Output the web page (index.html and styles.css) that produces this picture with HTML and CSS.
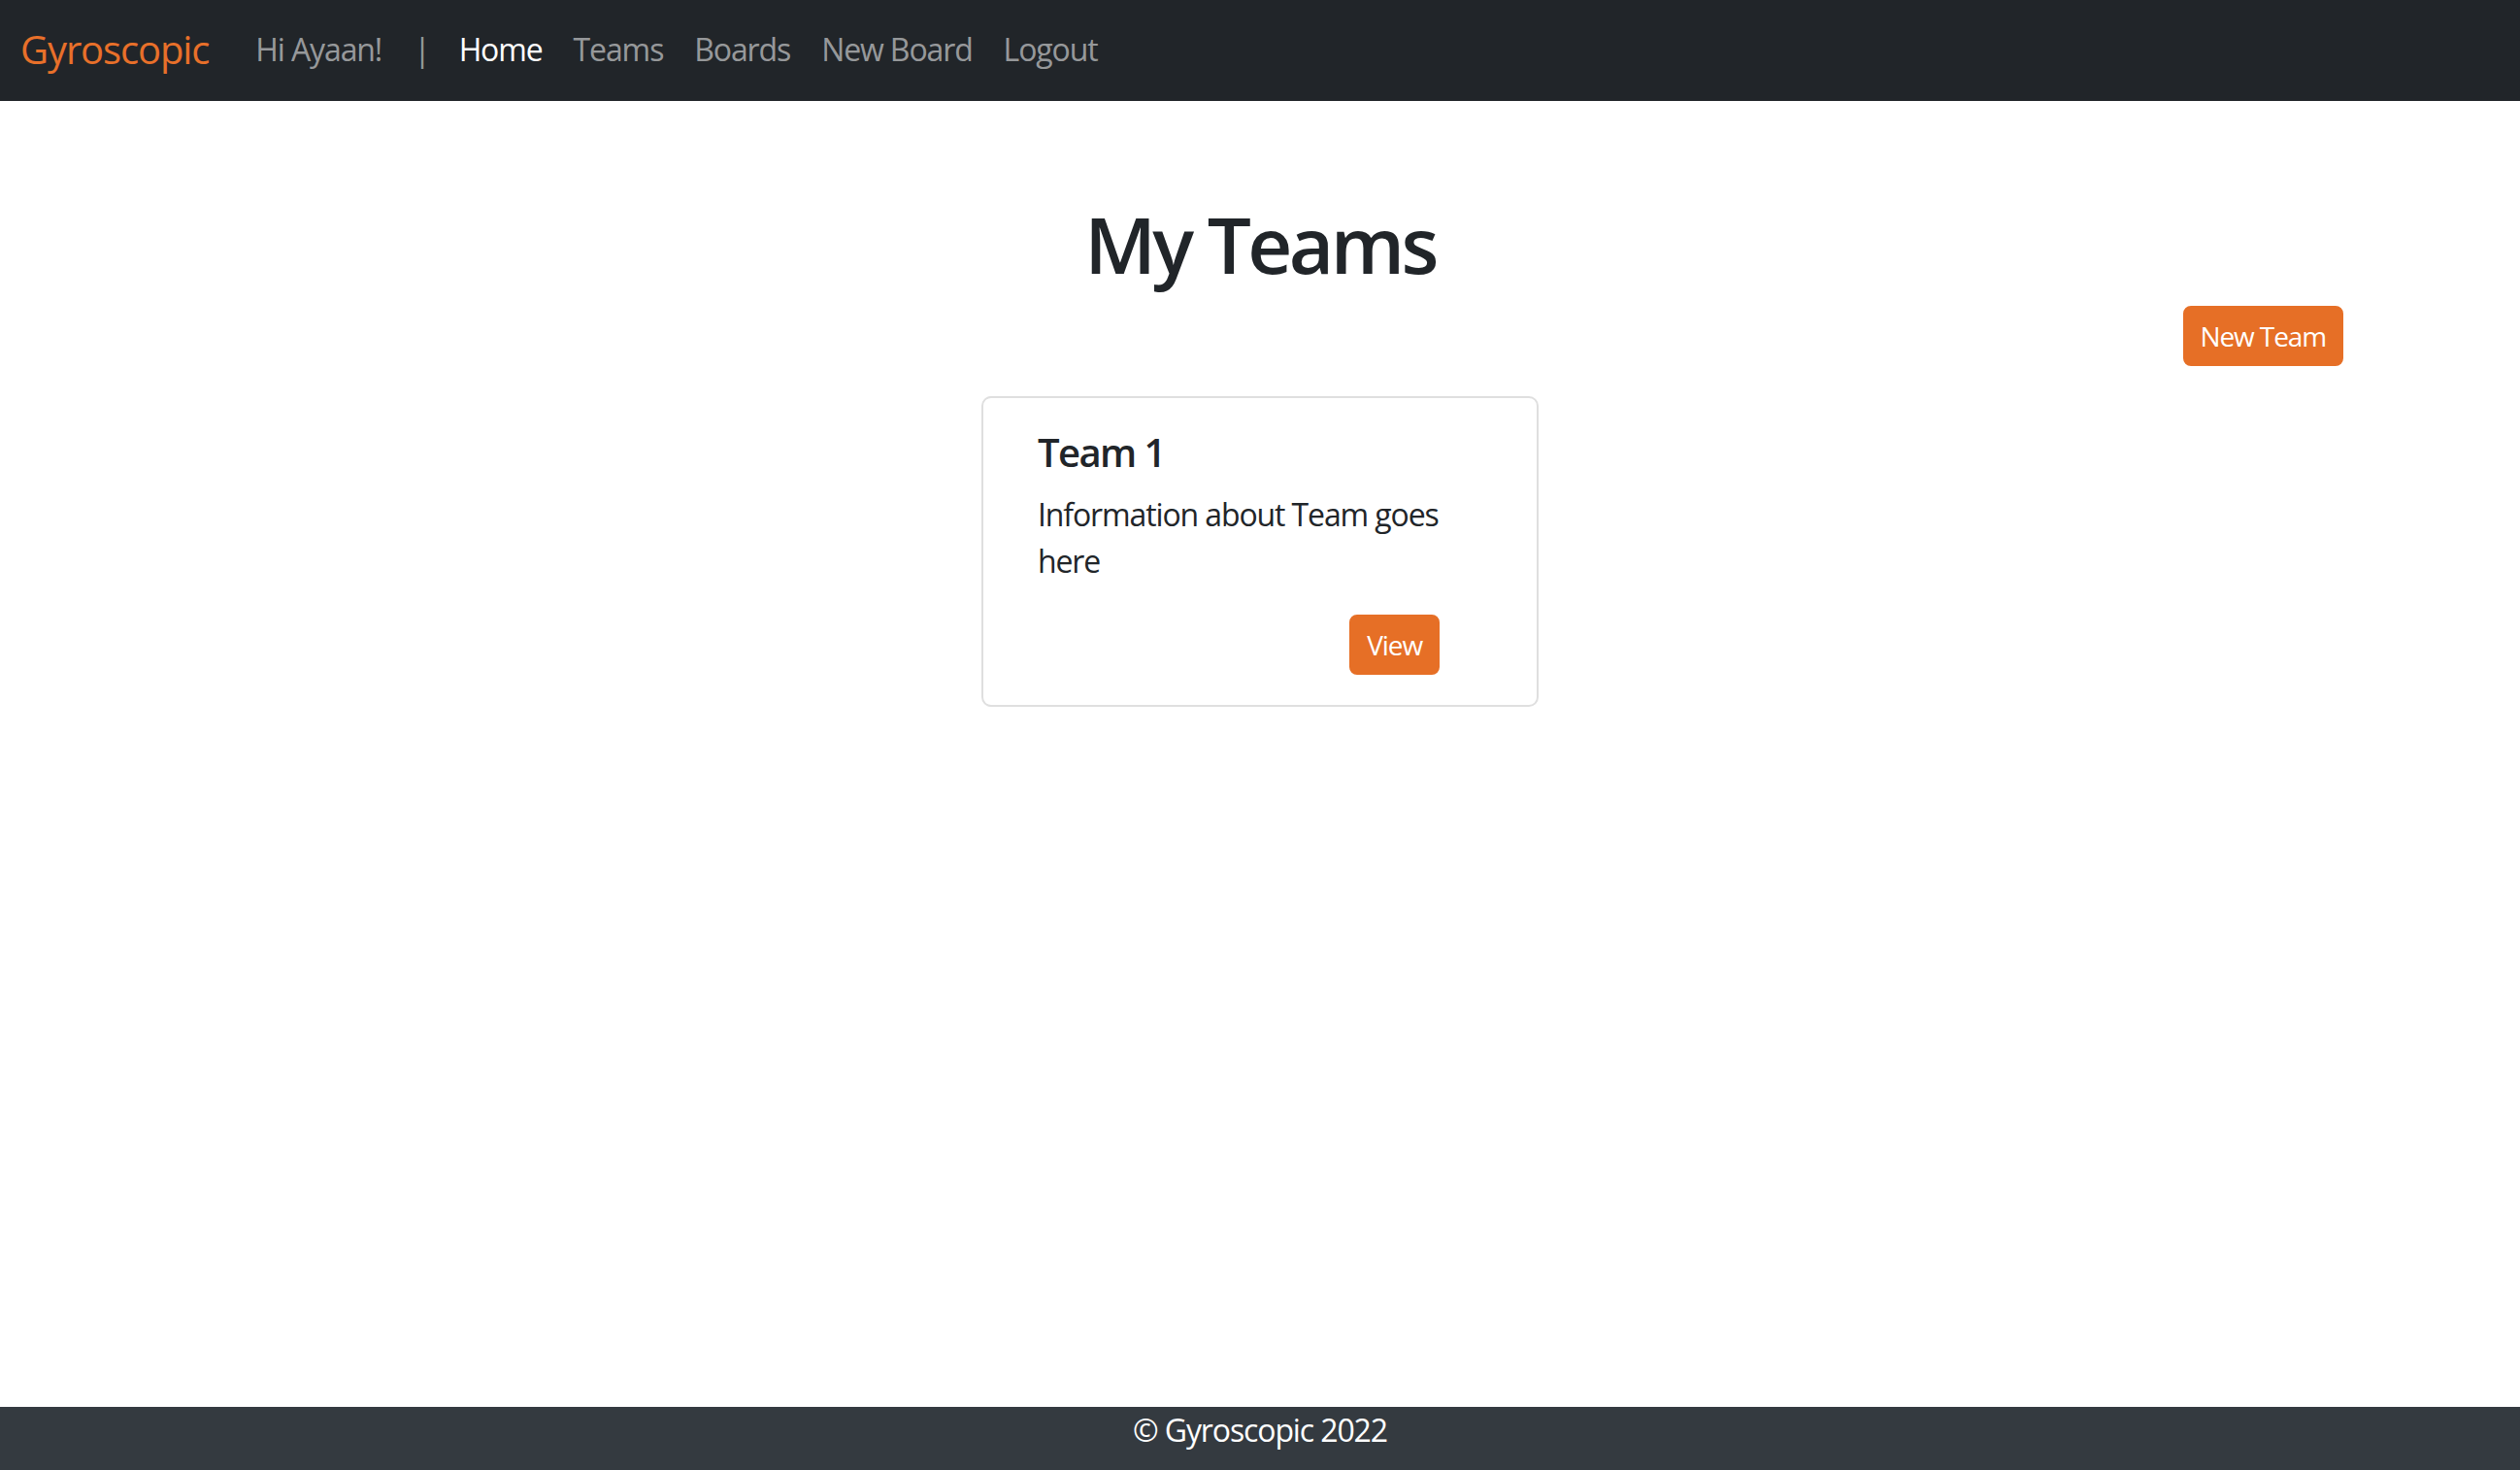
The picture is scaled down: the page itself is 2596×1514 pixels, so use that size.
FILE: index.html
```html
<!DOCTYPE html>
<html lang="en">
<head>
<meta charset="utf-8">
<title>Gyroscopic - My Teams</title>
<link rel="stylesheet" href="styles.css">
</head>
<body>
<nav class="navbar">
  <a class="brand" href="#">Gyroscopic</a>
  <ul class="nav">
    <li class="nav-item"><span class="nav-link">Hi Ayaan!</span></li>
    <li class="nav-item"><span class="nav-link nav-sep">|</span></li>
    <li class="nav-item"><a class="nav-link active" href="#">Home</a></li>
    <li class="nav-item"><a class="nav-link" href="#">Teams</a></li>
    <li class="nav-item"><a class="nav-link" href="#">Boards</a></li>
    <li class="nav-item"><a class="nav-link" href="#">New Board</a></li>
    <li class="nav-item"><a class="nav-link" href="#">Logout</a></li>
  </ul>
</nav>
<main class="main">
  <div class="container">
    <h1 class="page-title">My Teams</h1>
    <div class="actions">
      <a class="btn" href="#">New Team</a>
    </div>
    <div class="card">
      <div class="card-body">
        <h5 class="card-title">Team 1</h5>
        <p class="card-text">Information about Team goes here</p>
        <div class="card-actions">
          <a class="btn" href="#">View</a>
        </div>
      </div>
    </div>
  </div>
</main>
<footer class="footer">© Gyroscopic 2022</footer>
</body>
</html>
```
FILE: styles.css
```css
* { box-sizing: border-box; }
html, body { height: 100%; }
body {
  margin: 0;
  font-family: "Open Sans", "Noto Sans", sans-serif;
  font-size: 32px;
  line-height: 1.5;
  letter-spacing: -0.035em;
  color: #212529;
  background: #fff;
  display: flex;
  flex-direction: column;
  min-height: 100vh;
}
a { text-decoration: none; }

.navbar {
  height: 104px;
  background: #212529;
  display: flex;
  align-items: center;
  padding: 0 24px 2px 21px;
  flex-shrink: 0;
}
.brand {
  color: #e8702a;
  font-size: 40px;
  line-height: 60px;
  margin-right: 32px;
}
.nav {
  list-style: none;
  margin: 0;
  padding: 0;
  display: flex;
  align-items: center;
}
.nav-link {
  display: block;
  padding: 0 16px;
  line-height: 48px;
  font-size: 32px;
  color: rgba(255,255,255,0.55);
}
.nav-link.active { color: #fff; }
.nav-sep { padding: 0 14px 0 17px; }

.main { flex: 1 0 auto; }
.container {
  width: 2280px;
  margin: 0 auto;
  padding: 0 24px;
}
.page-title {
  margin: 99px 0 16px;
  text-align: center;
  font-size: 80px;
  font-weight: 600;
  line-height: 1.2;
  letter-spacing: -0.045em;
}
.actions {
  display: flex;
  justify-content: flex-end;
}
.btn {
  display: inline-block;
  background: #e66f26;
  color: #fff;
  border: 2px solid #e66f26;
  border-radius: 8px;
  padding: 8px 16px;
  font-size: 28px;
  line-height: 42px;
}
.card {
  width: 574px;
  margin: 31px auto 0;
  border: 2px solid #dfdfdf;
  border-radius: 10px;
}
.card-body {
  padding: 32px 56px 31px;
}
.card-title {
  margin: 0 0 16px;
  font-size: 40px;
  font-weight: 600;
  line-height: 1.2;
  letter-spacing: -0.04em;
}
.card-text {
  margin: 0 0 31px;
}
.card-actions {
  display: flex;
  justify-content: flex-end;
  padding-right: 44px;
}
.footer {
  flex-shrink: 0;
  background: #343a40;
  color: #fff;
  text-align: center;
  line-height: 48px;
  height: 65px;
  padding-top: 0;
}
```
